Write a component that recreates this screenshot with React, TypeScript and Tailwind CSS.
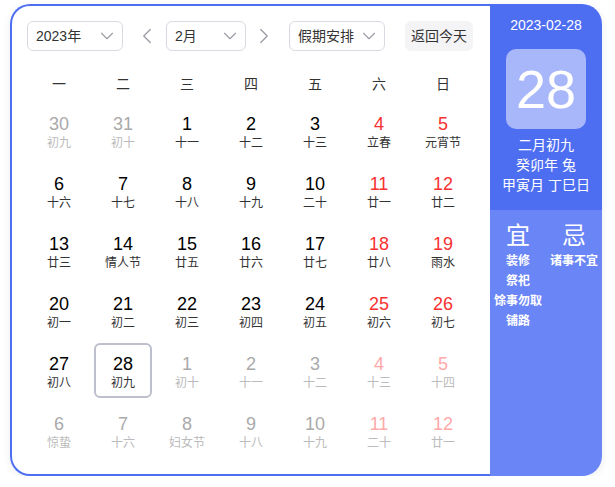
import { ChevronDown, ChevronLeft, ChevronRight } from "lucide-react";

type Day = { n: number; l: string; kind: "cur" | "other"; weekend: boolean; selected?: boolean };

const RAW: [number, string, boolean][][] = [
  [[30, "初九", false], [31, "初十", false], [1, "十一", true], [2, "十二", true], [3, "十三", true], [4, "立春", true], [5, "元宵节", true]],
  [[6, "十六", true], [7, "十七", true], [8, "十八", true], [9, "十九", true], [10, "二十", true], [11, "廿一", true], [12, "廿二", true]],
  [[13, "廿三", true], [14, "情人节", true], [15, "廿五", true], [16, "廿六", true], [17, "廿七", true], [18, "廿八", true], [19, "雨水", true]],
  [[20, "初一", true], [21, "初二", true], [22, "初三", true], [23, "初四", true], [24, "初五", true], [25, "初六", true], [26, "初七", true]],
  [[27, "初八", true], [28, "初九", true], [1, "初十", false], [2, "十一", false], [3, "十二", false], [4, "十三", false], [5, "十四", false]],
  [[6, "惊蛰", false], [7, "十六", false], [8, "妇女节", false], [9, "十八", false], [10, "十九", false], [11, "二十", false], [12, "廿一", false]],
];

const WEEKS: Day[][] = RAW.map((row) =>
  row.map(([n, l, cur], i) => ({
    n,
    l,
    kind: cur ? "cur" : "other",
    weekend: i >= 5,
    selected: cur && n === 28,
  }))
);

const WEEKDAYS = ["一", "二", "三", "四", "五", "六", "日"];

function Select({ label, width }: { label: string; width: string }) {
  return (
    <div
      className={`${width} h-[30px] flex items-center justify-between pl-[8px] pr-[4px] border border-[#d9dbe2] rounded-[6px] text-[14px] text-[#333]`}
    >
      <span>{label}</span>
      <ChevronDown size={22} strokeWidth={1.2} className="text-[#9a9ca5]" />
    </div>
  );
}

function Cell({ d }: { d: Day }) {
  let numColor = "text-black";
  let lunarColor = "text-[#333]";
  if (d.kind === "cur" && d.weekend) numColor = "text-[#f73131]";
  if (d.kind === "other") {
    numColor = d.weekend ? "text-[#ffa9a9]" : "text-[#aaaaaa]";
    lunarColor = "text-[#bbbbbb]";
  }
  return (
    <div className="h-[60px] flex justify-center pt-[3px]">
      <div
        className={`w-[58px] h-[55px] flex flex-col items-center pt-[9px] rounded-[6px] border-2 ${
          d.selected ? "border-[#bdc0cc]" : "border-transparent"
        }`}
      >
        <span className={`text-[18px] leading-[21px] ${numColor}`}>{d.n}</span>
        <span className={`text-[12px] leading-[16px] ${lunarColor}`}>{d.l}</span>
      </div>
    </div>
  );
}

export default function App() {
  return (
    <div
      className="pl-[10px] pt-[4px]"
      style={{ fontFamily: '"Liberation Sans", "Noto Sans CJK SC", sans-serif' }}
    >
      <div className="w-[592px] h-[472px] flex rounded-[20px] shadow-[0_2px_8px_rgba(0,0,0,0.08)]">
        {/* Calendar */}
        <div className="w-[480px] h-full border-l-2 border-t-2 border-b-2 border-[#4e6ef2] rounded-l-[20px] bg-white pl-[15px] pt-[15px]">
          <div className="flex items-center">
            <Select label="2023年" width="w-[96px]" />
            <ChevronLeft size={26} strokeWidth={1.2} className="ml-[11px] text-[#9a9ca5]" />
            <div className="ml-[6px]">
              <Select label="2月" width="w-[80px]" />
            </div>
            <ChevronRight size={26} strokeWidth={1.2} className="ml-[5px] text-[#9a9ca5]" />
            <div className="ml-[12px]">
              <Select label="假期安排" width="w-[96px]" />
            </div>
            <div className="ml-[20px] w-[68px] h-[30px] flex items-center justify-center bg-[#f4f4f6] rounded-[6px] text-[14px] text-[#333]">
              返回今天
            </div>
          </div>

          <div className="grid grid-cols-7 w-[448px] pt-[23px] pb-[6px]">
            {WEEKDAYS.map((w) => (
              <div key={w} className="text-center text-[14px] leading-[20px] text-[#333]">
                {w}
              </div>
            ))}
          </div>

          <div className="grid grid-cols-7 w-[448px]">
            {WEEKS.flat().map((d, i) => (
              <Cell key={i} d={d} />
            ))}
          </div>
        </div>

        {/* Side panel */}
        <div className="w-[112px] h-full flex flex-col rounded-r-[20px] overflow-hidden text-white">
          <div className="bg-[#4e6ef2] flex flex-col items-center pt-[11px] pb-[15px]">
            <div className="text-[14px] leading-[20px]">2023-02-28</div>
            <div className="mt-[14px] w-[80px] h-[80px] rounded-[10px] bg-[#a8b7f9] flex items-center justify-center text-[54px] leading-none">
              28
            </div>
            <div className="mt-[6px] text-[14px] leading-[20px]">二月初九</div>
            <div className="text-[14px] leading-[20px]">癸卯年 兔</div>
            <div className="text-[14px] leading-[20px]">甲寅月 丁巳日</div>
          </div>
          <div className="flex-1 bg-[#6a85f5] grid grid-cols-2 pt-[11px]">
            <div className="flex flex-col items-center">
              <div className="text-[24px] leading-[30px]">宜</div>
              {["装修", "祭祀", "馀事勿取", "铺路"].map((t) => (
                <div key={t} className="text-[12px] leading-[20px] font-bold whitespace-nowrap">
                  {t}
                </div>
              ))}
            </div>
            <div className="flex flex-col items-center">
              <div className="text-[24px] leading-[30px]">忌</div>
              <div className="text-[12px] leading-[20px] font-bold whitespace-nowrap">诸事不宜</div>
            </div>
          </div>
        </div>
      </div>
    </div>
  );
}
